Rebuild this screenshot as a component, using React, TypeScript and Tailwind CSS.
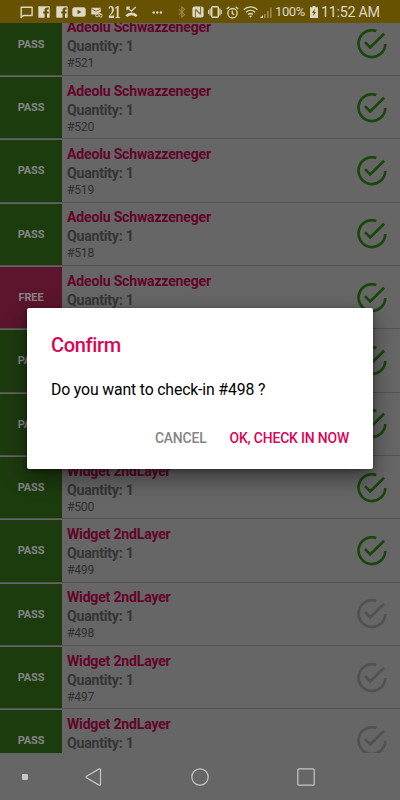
import React from 'react';

interface Ticket {
  id: number;
  name: string;
  type: 'PASS' | 'FREE';
  checkedIn: boolean;
}

const TICKETS: Ticket[] = [
  { id: 521, name: 'Adeolu Schwazzeneger', type: 'PASS', checkedIn: true },
  { id: 520, name: 'Adeolu Schwazzeneger', type: 'PASS', checkedIn: true },
  { id: 519, name: 'Adeolu Schwazzeneger', type: 'PASS', checkedIn: true },
  { id: 518, name: 'Adeolu Schwazzeneger', type: 'PASS', checkedIn: true },
  { id: 517, name: 'Adeolu Schwazzeneger', type: 'FREE', checkedIn: true },
  { id: 502, name: 'Widget 2ndLayer', type: 'PASS', checkedIn: true },
  { id: 501, name: 'Widget 2ndLayer', type: 'PASS', checkedIn: true },
  { id: 500, name: 'Widget 2ndLayer', type: 'PASS', checkedIn: true },
  { id: 499, name: 'Widget 2ndLayer', type: 'PASS', checkedIn: true },
  { id: 498, name: 'Widget 2ndLayer', type: 'PASS', checkedIn: false },
  { id: 497, name: 'Widget 2ndLayer', type: 'PASS', checkedIn: false },
  { id: 496, name: 'Widget 2ndLayer', type: 'PASS', checkedIn: false },
];

const FacebookIcon = ({ className }: { className: string }) => (
  <svg className={className} width="12" height="12" viewBox="0 0 12 12">
    <path
      fill="currentColor"
      d="M1 .3h10a.7.7 0 0 1 .7.7v10a.7.7 0 0 1-.7.7H9V7.5h1.6V5.4H9V4.300c0-.6.3-.8.9-.8h.8V1.600H9.200C7.400 1.600 6.600 2.600 6.600 4v1.400H5.200v2.100h1.400v4.200H1a.7.7 0 0 1-.7-.7V1A.7.7 0 0 1 1 .3z"
    />
  </svg>
);

/**
 * Android status bar with notification icons on the left
 */
const StatusBar = () => (
  <header className="flex h-[23px] shrink-0 items-center bg-[#665200] pl-5 pt-px text-[#dcd8c4]">
    <svg width="13" height="13" viewBox="0 0 13 13" fill="none" stroke="currentColor" strokeWidth="1.4">
      <path d="M1.200 11.600V1.300h10.900v8.200H3.300z" strokeLinejoin="round" />
    </svg>
    <FacebookIcon className="ml-[5px]" />
    <FacebookIcon className="ml-[6px]" />
    <svg className="ml-[4px]" width="14" height="10" viewBox="0 0 14 10">
      <rect x=".3" y=".2" width="13.4" height="9.6" rx="2.4" fill="currentColor" />
      <path d="M5.500 2.800v4.400L9.400 5z" fill="#665200" />
    </svg>
    <svg className="ml-[5px]" width="12" height="11" viewBox="0 0 12 11" fill="none">
      <path d="M.3.8h9.700v3.700L5 7.600H.3z" fill="currentColor" />
      <path d="M.5 1.700l4.700 2.600 4.700-2.600" stroke="#665200" strokeWidth=".8" />
      <circle cx="6.100" cy="8.400" r="1.500" stroke="currentColor" />
      <circle cx="9.800" cy="8.600" r="1.400" stroke="currentColor" />
      <path d="M5.300 5.200l5.400 2.200" stroke="currentColor" />
    </svg>
    <span className="ml-[5px] flex w-3 justify-center">
      <span className="scale-x-[0.53] font-['DejaVu_Serif',serif] text-[17.500px] font-bold leading-[14px] tracking-[-1px]">21</span>
    </span>
    <svg className="ml-[5px]" width="13" height="12" viewBox="0 0 13 12" fill="none" stroke="currentColor">
      <path d="M2 1.200l4.300 4L10.800 1M2 4.200V1.200h3" strokeWidth="1.3" />
      <path d="M1.300 10.100c2.800-3 7.600-3 10.400 0" strokeWidth="2.7" />
    </svg>
    <svg className="ml-[14px]" width="11" height="3" viewBox="0 0 11 3" fill="currentColor">
      <circle cx="1.700" cy="1.500" r="1.200" />
      <circle cx="5.300" cy="1.500" r="1.200" />
      <circle cx="8.900" cy="1.500" r="1.200" />
    </svg>
    <svg className="ml-[15px] text-[#948651]" width="8" height="12" viewBox="0 0 8 12" fill="none" stroke="currentColor" strokeWidth="1.1">
      <path d="M.8 3.200l5.800 5.600L3.700 11.200V.8l2.900 2.400L.8 8.800" />
    </svg>
    <svg className="ml-[6px]" width="12" height="12" viewBox="0 0 12 12" fill="none">
      <rect x=".4" y=".4" width="11.200" height="11.200" rx="2" fill="currentColor" />
      <path d="M3.400 11.500V3.800l5 4.900M8.600.5v7.400L3.600 3" stroke="#665200" strokeWidth=".8" />
    </svg>
    <svg className="ml-[4px]" width="14" height="12" viewBox="0 0 14 12" fill="none" stroke="currentColor">
      <rect x="3.700" y=".8" width="6.600" height="10.400" rx="1" strokeWidth="1.500" />
      <path d="M2.100 2.500v7M11.900 2.500v7" strokeWidth="1.200" />
      <path d="M.6 4v4M13.400 4v4" strokeWidth="1" />
    </svg>
    <svg className="ml-[4px]" width="13" height="13" viewBox="0 0 13 13" fill="none" stroke="currentColor" strokeWidth="1.3">
      <circle cx="6.500" cy="7.200" r="4.700" />
      <path d="M6.300 4.600v3l2 1.200M.7 3.100L3.400.8M12.300 3.100L9.600.8" />
    </svg>
    <svg className="ml-[4px]" width="15" height="12" viewBox="0 0 15 12" fill="none" stroke="currentColor" strokeWidth="1.3">
      <path d="M.7 3.700c3.900-3.700 9.700-3.700 13.600 0M2.900 6.200c2.700-2.500 6.500-2.500 9.200 0M5 8.600c1.500-1.300 3.500-1.300 5 0" />
      <path d="M6 10l1.500 1.700L9 10c-.9-.7-2.100-.7-3 0z" fill="currentColor" stroke="none" />
    </svg>
    <svg className="ml-[2px]" width="12" height="12" viewBox="0 0 12 12" fill="currentColor">
      <path d="M0 12l3-3v3z" />
      <path d="M4 8h1.700v4H4zM7 5h1.700v7H7zM10 1.500h1.600V12H10z" opacity=".42" />
    </svg>
    <span className="ml-[3px] w-[31px] whitespace-nowrap text-[13px] tracking-[-0.4px]">100%</span>
    <svg className="ml-[4px]" width="8" height="12" viewBox="0 0 8 12">
      <path d="M2.500 0h3v1.200H8V12H0V1.200h2.500z" fill="currentColor" />
      <path d="M4.800 2.800L2 7h1.700l-.6 3.200L6 6H4.300z" fill="#665200" />
    </svg>
    <span className="ml-[3px] whitespace-nowrap pt-px text-[14.300px] tracking-[-0.280px]">11:52 AM</span>
  </header>
);

const CheckIcon = ({ checked }: { checked: boolean }) => (
  <svg
    className={checked ? 'text-[#18470a]' : 'text-[#515151]'}
    width="30"
    height="30"
    viewBox="0 0 30 30"
    fill="none"
    stroke="currentColor"
    strokeWidth="2.6"
  >
    <path d="M19.300 2A13.400 13.400 0 1 0 28.300 15" />
    <path d="M8 13.200l5.200 5.200L27.100 4.700" />
  </svg>
);

const TicketRow = ({ ticket }: { ticket: Ticket }) => (
  <li className="flex h-[63.340px] shrink-0 border-b border-[#545454] pt-px">
    <div
      className={`flex w-[62px] items-center justify-center pt-px text-[11px] font-bold tracking-[-0.1px] text-[#858585] ${
        ticket.type === 'FREE' ? 'bg-[#5c152d]' : 'bg-[#1d3c0e]'
      }`}
    >
      {ticket.type}
    </div>
    <div className="flex-1 whitespace-nowrap pl-[5px] pt-[4.700px]">
      <p className="text-[14.100px] font-bold leading-[19px] tracking-[-0.210px] text-[#63052a]">{ticket.name}</p>
      <p className="text-[14.100px] font-bold leading-[19px] tracking-[-0.210px] text-[#353535]">Quantity: 1</p>
      <p className="text-[12.200px] leading-[15px] tracking-[-0.250px] text-[#303030]">#{ticket.id}</p>
    </div>
    <div className="flex items-center pr-[13px]">
      <CheckIcon checked={ticket.checkedIn} />
    </div>
  </li>
);

const ConfirmDialog = () => (
  <div className="absolute left-[27px] top-[308px] flex h-[160.500px] w-[346px] flex-col rounded-[2px] bg-white px-6 shadow-[0_9px_22px_rgba(0,0,0,0.45),0_1px_4px_rgba(0,0,0,0.35)]">
    <h2 className="pt-[24px] text-[20px] font-medium leading-[26px] tracking-[-0.330px] text-[#de0255]">Confirm</h2>
    <p className="pt-[20.500px] text-[15.800px] leading-[22px] tracking-[-0.150px] text-black">Do you want to check-in #498 ?</p>
    <div className="flex justify-end gap-[23px] pt-[28.500px] text-[13.900px] font-medium leading-[18px] tracking-[-0.150px]">
      <button className="text-[#858585]">CANCEL</button>
      <button className="text-[#de0255]">OK, CHECK IN NOW</button>
    </div>
  </div>
);

const NavigationBar = () => (
  <nav className="flex h-[47px] shrink-0 items-center text-[#c6c6c6]">
    <span className="ml-[22px] size-[6px] rounded-[1px] bg-[#c6c6c6]" />
    <svg className="ml-[57px]" width="17" height="18" viewBox="0 0 17 18" fill="none" stroke="currentColor" strokeWidth="1.2">
      <path d="M1.500 8.300L14.200.9q1.300-.4 1.300.9v14.400q0 1.300-1.300.9L1.500 9.700q-.9-.7 0-1.400z" />
    </svg>
    <svg className="ml-[89px]" width="18" height="18" viewBox="0 0 18 18" fill="none" stroke="currentColor" strokeWidth="1.2">
      <circle cx="9" cy="9" r="8.200" />
    </svg>
    <svg className="ml-[88px]" width="18" height="18" viewBox="0 0 18 18" fill="none" stroke="currentColor" strokeWidth="1.2">
      <rect x=".8" y=".8" width="16.400" height="16.400" rx="1.300" />
    </svg>
  </nav>
);

const App: React.FC = () => {
  return (
    <div className="relative flex h-[800px] w-[400px] flex-col overflow-hidden bg-[#666666] font-[Roboto,sans-serif]">
      <StatusBar />
      <main className="min-h-0 flex-1 overflow-hidden">
        <ul className="-mt-[10.300px] flex flex-col">
          {TICKETS.map((ticket) => (
            <TicketRow key={ticket.id} ticket={ticket} />
          ))}
        </ul>
      </main>
      <NavigationBar />
      <ConfirmDialog />
    </div>
  );
};

export default App;
